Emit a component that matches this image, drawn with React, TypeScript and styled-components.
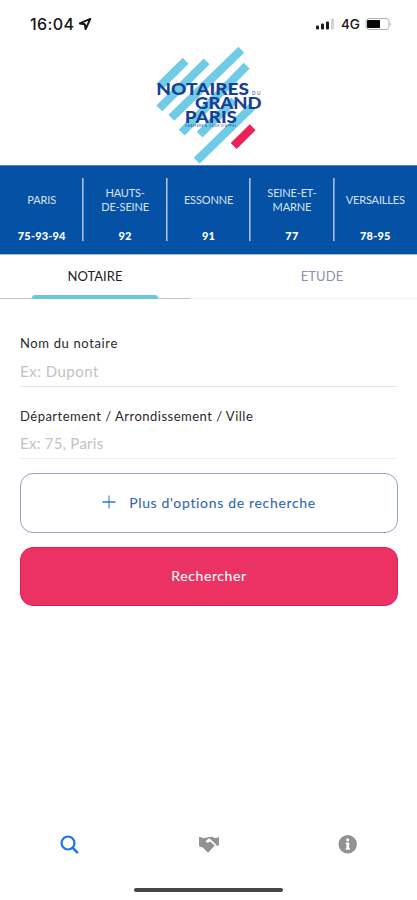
import React, { useState } from 'react';
import styled, { createGlobalStyle } from 'styled-components';

const GlobalStyle = createGlobalStyle`
  * { box-sizing: border-box; }
  body { margin: 0; background: #fff; font-family: Lato, "Open Sans", sans-serif; }
  button, input { font: inherit; margin: 0; padding: 0; border: 0; background: none; }
`;

const Screen = styled.main`
  width: 417px;
  height: 900px;
  display: flex;
  flex-direction: column;
  background: #fff;
  overflow: hidden;
`;

const StatusBar = styled.header`
  height: 40px;
  flex: none;
  display: flex;
  justify-content: space-between;
  padding: 14px 25px 0 30px;
  font-family: Inter, sans-serif;
  color: #151515;
`;

const Clock = styled.div`
  display: flex;
  gap: 4px;
  height: 20px;
  align-items: center;
  font-size: 16px;
  font-weight: 500;
  letter-spacing: 0.4px;
`;

const Signals = styled.div`
  display: flex;
  height: 20px;
  align-items: center;
  font-size: 13.5px;
  font-weight: 500;
`;

const Network = styled.span`
  width: 19px;
  margin: 0 5px 0 6px;
`;

const Brand = styled.div`
  height: 125px;
  flex: none;
  display: flex;
  justify-content: center;
  padding-left: 3px;
`;

const Departments = styled.nav`
  height: 90px;
  flex: none;
  display: grid;
  grid-template-columns: repeat(5, 1fr);
  padding: 12px 0 13px;
  background: #0451a5;
  border-top: 1px solid #5281c1;
  border-bottom: 1px solid #a9b9da;
  color: #fff;
`;

const Department = styled.div`
  height: 63px;
  display: grid;
  grid-template-rows: 44px 19px;
  text-align: center;
  & + & { box-shadow: -1px 0 #a9bce0, inset 1px 0 #6e91ca; }
`;

const DepartmentName = styled.span`
  align-self: center;
  white-space: pre-line;
  font-size: 11px;
  line-height: 14px;
  color: #d9e2f2;
  letter-spacing: -0.15px;
`;

const DepartmentCodes = styled.strong`
  font-size: 11px;
  line-height: 27px;
  font-weight: 900;
  letter-spacing: 0.15px;
`;

const Tabs = styled.div`
  height: 44px;
  flex: none;
  display: grid;
  grid-template-columns: 190px 264px;
`;

const Tab = styled.button<{ $active: boolean }>`
  display: flex;
  flex-direction: column;
  align-items: center;
  justify-content: space-between;
  padding-top: 12px;
  font-size: 13px;
  line-height: 18px;
  letter-spacing: ${({ $active }) => ($active ? 0 : 0.1)}px;
  color: ${({ $active }) => ($active ? '#222' : '#8b91b1')};
  border-bottom: 1px solid ${({ $active }) => ($active ? '#bfc3c6' : '#f1f1f1')};
`;

const TabMarker = styled.i`
  width: 126px;
  height: 4px;
  margin-bottom: -1px;
  border-radius: 3px 3px 0 0;
  background: #68c8e0;
`;

const SearchForm = styled.form`
  flex: 1;
  padding: 34px 20px 0;
`;

const Field = styled.label<{ $last?: boolean }>`
  display: flex;
  flex-direction: column;
  height: ${({ $last }) => ($last ? 53 : 54)}px;
  margin-bottom: ${({ $last }) => ($last ? 14 : 19)}px;
  border-bottom: 1px solid ${({ $last }) => ($last ? '#f0f0f0' : '#e5e5e5')};
`;

const FieldLabel = styled.span<{ $spacing: number }>`
  font-size: 13px;
  line-height: 20px;
  color: #292929;
  letter-spacing: ${({ $spacing }) => $spacing}px;
`;

const FieldInput = styled.input<{ $compact?: boolean }>`
  width: 100%;
  height: 24px;
  margin-top: ${({ $compact }) => ($compact ? 5 : 6)}px;
  font-size: 15px;
  letter-spacing: ${({ $compact }) => ($compact ? 0.25 : 0.5)}px;
  outline: none;
  &::placeholder { color: #c2c2c2; opacity: 1; }
`;

const ActionButton = styled.button<{ $primary?: boolean }>`
  width: 378px;
  height: ${({ $primary }) => ($primary ? 59 : 60)}px;
  display: flex;
  align-items: center;
  justify-content: center;
  gap: 13px;
  padding-bottom: 2px;
  margin-bottom: 14px;
  border-radius: 13px;
  border: 1px solid ${({ $primary }) => ($primary ? '#e51c59' : '#8fa1cb')};
  background: ${({ $primary }) => ($primary ? '#eb3262' : '#fff')};
  color: ${({ $primary }) => ($primary ? '#fff' : '#3268ac')};
  font-size: 14px;
  letter-spacing: ${({ $primary }) => ($primary ? 0.6 : 0.67)}px;
  -webkit-text-stroke: 0.1px;
`;

const BottomNav = styled.nav`
  height: 54px;
  flex: none;
  display: grid;
  grid-template-columns: repeat(3, 1fr);
`;

const NavButton = styled.button<{ $active?: boolean }>`
  display: flex;
  justify-content: center;
  align-items: flex-start;
  padding-top: 1px;
  color: ${({ $active }) => ($active ? '#1774f4' : '#929292')};
`;

const HomeBar = styled.i`
  width: 149px;
  height: 4px;
  flex: none;
  align-self: center;
  margin-bottom: 8px;
  border-radius: 2px;
  background: #454545;
`;

const departments = [
  { name: 'PARIS', codes: '75-93-94' },
  { name: 'HAUTS-\nDE-SEINE', codes: '92' },
  { name: 'ESSONNE', codes: '91' },
  { name: 'SEINE-ET-\nMARNE', codes: '77' },
  { name: 'VERSAILLES', codes: '78-95' },
];

const Logo = () => (
  <svg width="130" height="125" viewBox="0 0 390 375" aria-label="Notaires du Grand Paris">
    <g stroke="#70cce6" strokeWidth="25">
      <path d="M43 140 122 62M43 205 185 64M79 233 289 29M110 278 305 77M164 284 267 181M155 362 321 200" />
    </g>
    <path d="M266 318 323 262" stroke="#e92359" strokeWidth="25" />
    <g fill="#173f93" fontFamily="Lato, sans-serif" fontWeight="900" fontSize="51">
      <text x="34" y="165" textLength="278" lengthAdjust="spacingAndGlyphs">NOTAIRES</text>
      <text x="150" y="207" textLength="200" lengthAdjust="spacingAndGlyphs">GRAND</text>
      <text x="119" y="249" textLength="157" lengthAdjust="spacingAndGlyphs">PARIS</text>
      <text x="321" y="164" fontSize="14" fontWeight="400" textLength="25">DU</text>
      <text x="120" y="262" fontSize="9" fontWeight="400" textLength="154">CHAMBRE &amp; COUR D'APPEL</text>
    </g>
  </svg>
);

const LocationIcon = () => (
  <svg width="14" height="14" viewBox="0 0 14 14" fill="none" stroke="currentColor" strokeWidth="2" strokeLinejoin="round">
    <path d="M12.3 1.9 1.8 6.4l5 .8.8 4.9z" />
  </svg>
);

const SignalIcon = () => (
  <svg width="20" height="14" viewBox="0 0 20 14" fill="#1b1b1b">
    <rect x="1" y="8.5" width="3" height="4" rx="1" />
    <rect x="6" y="6.5" width="3" height="6" rx="1" />
    <rect x="11" y="4.5" width="3" height="8" rx="1" />
    <rect x="16" y="1.5" width="3" height="11" rx="1" fill="#d2d2d2" />
  </svg>
);

const BatteryIcon = () => (
  <svg width="27" height="14" viewBox="0 0 27 14">
    <rect x="1" y="1.5" width="23" height="11" rx="3" fill="#fff" stroke="#b1b1b1" />
    <rect x="2" y="3" width="13" height="8" rx="1" fill="#080808" />
    <path d="M25.2 5.5V9q1.5-1.7 0-3.5" fill="#999" />
  </svg>
);

const PlusIcon = () => (
  <svg width="14" height="14" viewBox="0 0 14 14" fill="none" strokeWidth="1.5">
    <path d="M7 .5v13" stroke="#709ddd" />
    <path d="M.5 7h13" stroke="#2878d3" />
  </svg>
);

const SearchIcon = () => (
  <svg width="19" height="20" viewBox="0 0 19 20" fill="none" stroke="currentColor" strokeWidth="2.2" strokeLinecap="round">
    <circle cx="8" cy="8" r="6.5" />
    <path d="m12.8 12.9 4.3 4.5" strokeWidth="2.6" />
  </svg>
);

const HandshakeIcon = () => (
  <svg width="20" height="20" viewBox="0 0 20 20">
    <path d="M0 2h1l4 1.2L9 2.3l4-.5 3.5 1.5L20 2v8.5l-4.2.1-6.7 7.2-5.4-5.2L0 11.3z" fill="currentColor" />
    <path d="M7.2 6.1 10.4 4.3 16.7 10.3M7.4 6.4q1.5 1.2 3.5-.9" fill="none" stroke="#fff" strokeWidth="1.6" strokeLinejoin="round" />
  </svg>
);

const InfoIcon = () => (
  <svg width="20" height="20" viewBox="0 0 20 20" fill="currentColor">
    <circle cx="9.7" cy="9.2" r="9.2" />
    <circle cx="9.7" cy="4.8" r="1.6" fill="#fff" />
    <path d="M7.7 7.5h3.5v5.7h.8v1.5H7.6v-1.5h.8V9h-.7z" fill="#fff" />
  </svg>
);

export default function App() {
  const [tab, setTab] = useState('NOTAIRE');
  return (
    <>
      <GlobalStyle />
      <Screen>
        <StatusBar>
          <Clock>16:04<LocationIcon /></Clock>
          <Signals><SignalIcon /><Network>4G</Network><BatteryIcon /></Signals>
        </StatusBar>
        <Brand><Logo /></Brand>
        <Departments>
          {departments.map(({ name, codes }) => (
            <Department key={name}>
              <DepartmentName>{name}</DepartmentName>
              <DepartmentCodes>{codes}</DepartmentCodes>
            </Department>
          ))}
        </Departments>
        <Tabs>
          {['NOTAIRE', 'ETUDE'].map((name) => (
            <Tab key={name} $active={tab === name} onClick={() => setTab(name)}>
              {name}
              {tab === name && <TabMarker />}
            </Tab>
          ))}
        </Tabs>
        <SearchForm onSubmit={(event) => event.preventDefault()}>
          <Field>
            <FieldLabel $spacing={0.63}>Nom du notaire</FieldLabel>
            <FieldInput placeholder="Ex: Dupont" />
          </Field>
          <Field $last>
            <FieldLabel $spacing={0.49}>Département / Arrondissement / Ville</FieldLabel>
            <FieldInput $compact placeholder="Ex: 75, Paris" />
          </Field>
          <ActionButton type="button"><PlusIcon />Plus d'options de recherche</ActionButton>
          <ActionButton type="submit" $primary>Rechercher</ActionButton>
        </SearchForm>
        <BottomNav>
          <NavButton $active aria-label="Rechercher"><SearchIcon /></NavButton>
          <NavButton aria-label="Services"><HandshakeIcon /></NavButton>
          <NavButton aria-label="Informations"><InfoIcon /></NavButton>
        </BottomNav>
        <HomeBar />
      </Screen>
    </>
  );
}
